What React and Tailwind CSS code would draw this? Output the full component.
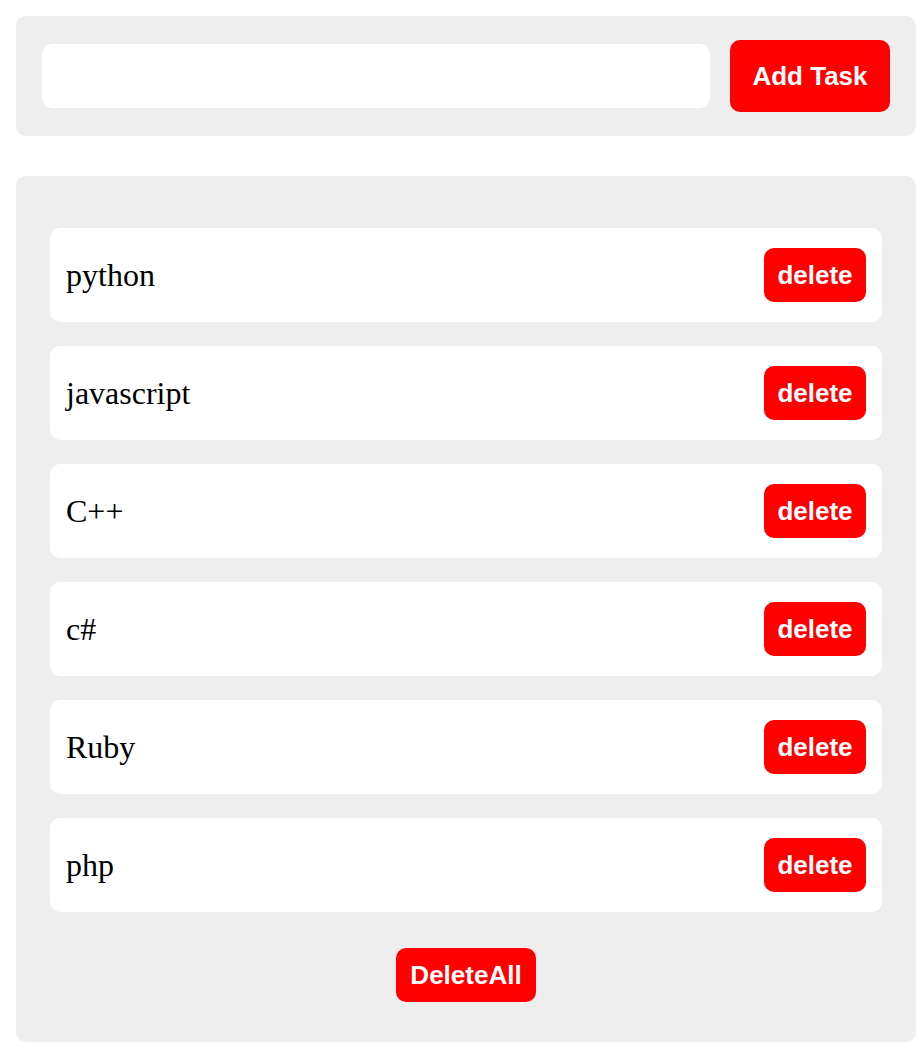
import React, { useState } from "react";

const INITIAL = ["python", "javascript", "C++", "c#", "Ruby", "php"];

export default function App() {
  const [tasks, setTasks] = useState(INITIAL);
  const [text, setText] = useState("");

  const addTask = () => {
    if (!text.trim()) return;
    setTasks([...tasks, text]);
    setText("");
  };

  const btn =
    "bg-[#ff0000] text-white font-bold text-[26px] rounded-[10px] flex items-center justify-center font-['Liberation_Sans',Arial,sans-serif]";

  return (
    <div className="min-h-screen bg-white pt-4 pl-4 w-[916px]">
      {/* input bar */}
      <div className="bg-[#eeeeee] rounded-[10px] h-[120px] flex items-center pl-[26px] pr-[26px] gap-5">
        <input
          value={text}
          onChange={(e) => setText(e.target.value)}
          className="bg-white rounded-[10px] h-16 flex-1 outline-none px-4 text-2xl font-['Liberation_Serif',serif]"
        />
        <button onClick={addTask} className={`${btn} w-40 h-[72px]`}>
          Add Task
        </button>
      </div>

      {/* list */}
      <div className="bg-[#eeeeee] rounded-[10px] mt-10 pt-[52px] pb-10 px-[34px] flex flex-col">
        <ul className="flex flex-col gap-6">
          {tasks.map((t, i) => (
            <li
              key={i}
              className="bg-white rounded-[10px] h-[94px] flex items-center justify-between pl-4 pr-4"
            >
              <span className="text-[32px] text-black font-['Liberation_Serif','Times_New_Roman',serif]">{t}</span>
              <button
                onClick={() => setTasks(tasks.filter((_, j) => j !== i))}
                className={`${btn} w-[102px] h-[54px]`}
              >
                delete
              </button>
            </li>
          ))}
        </ul>
        <button onClick={() => setTasks([])} className={`${btn} w-[140px] h-[54px] mt-9 self-center`}>
          DeleteAll
        </button>
      </div>
    </div>
  );
}
